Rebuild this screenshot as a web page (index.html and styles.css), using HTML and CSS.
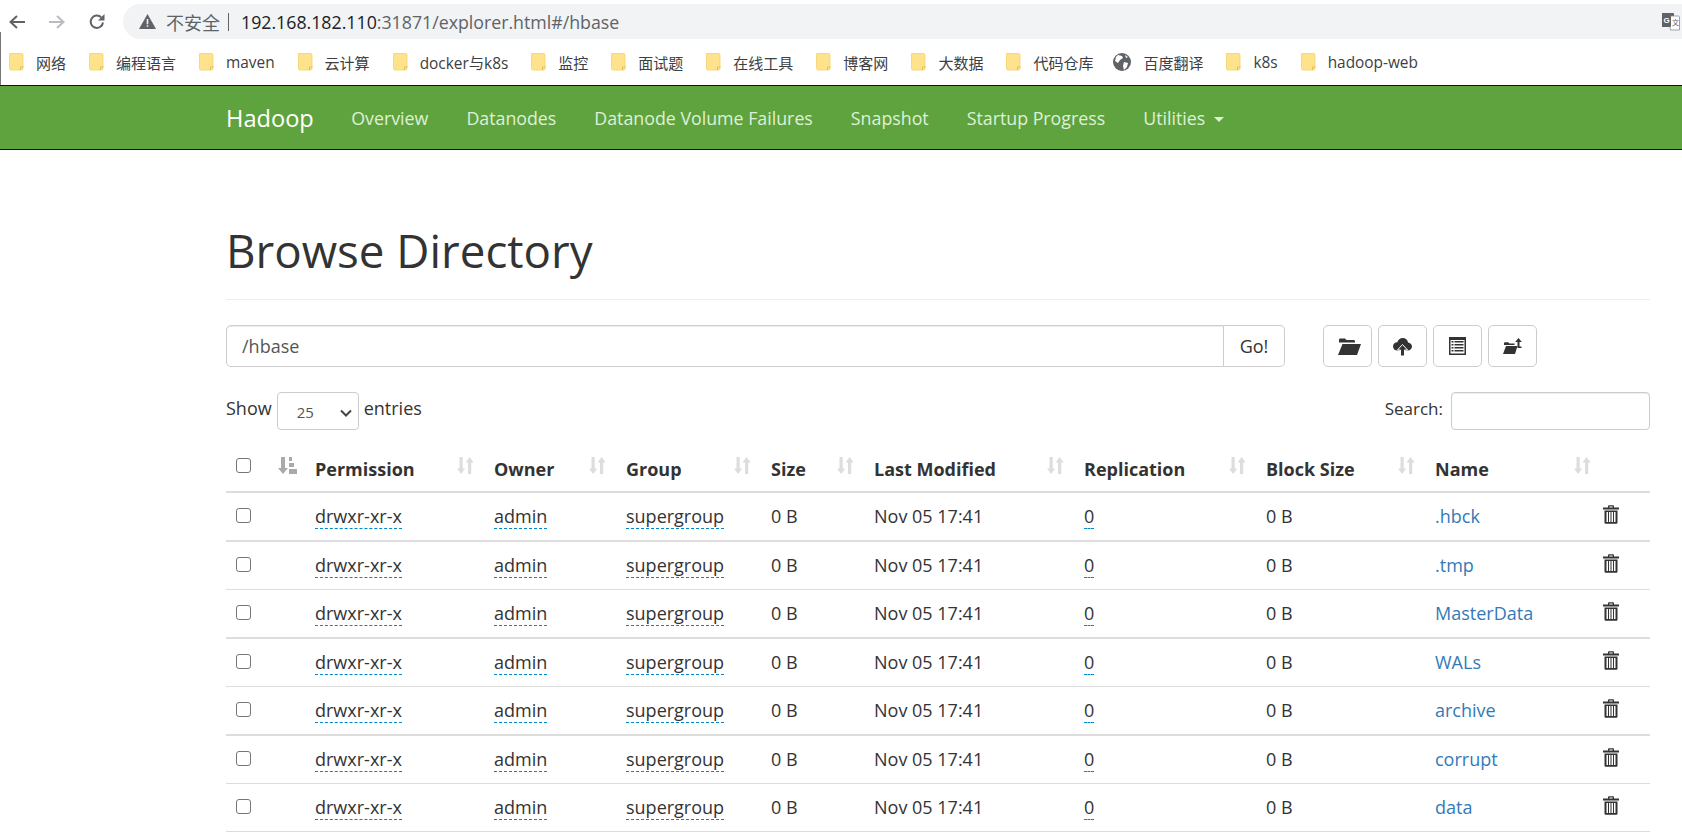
FILE: index.html
```html
<!DOCTYPE html>
<html lang="en">
<head>
  <meta charset="UTF-8" />
  <title>Browsing HDFS</title>
  <link rel="stylesheet" href="styles.css">
</head>
<body>

<svg class="defs" width="0" height="0">
  <symbol id="folder-y" viewBox="0 0 15 18">
    <path d="M1 0.500h11.500c1 0 1.500 0.500 1.500 1.500v13.500c0 1-0.500 1.500-1.500 1.500h-10.500c-1 0-1.500-0.500-1.500-1.500v-14.500c0-0.300 0-0.500 0.500-0.500z" fill="#ffe38c" stroke="#f5d26a" stroke-width="0.800"/>
    <path d="M11.500 17v-3h3" fill="none" stroke="#e9bd4c" stroke-width="1"/>
  </symbol>
  <symbol id="sort" viewBox="0 0 17 17">
    <path d="M2.500 0h3.200v11.500h2.500l-4.100 5.500-4.100-5.500h2.500z" fill="currentColor"/>
    <path d="M11 17h3.200V5.500h2.500L12.600 0 8.500 5.500H11z" fill="currentColor"/>
  </symbol>
  <symbol id="trash" viewBox="0 0 16 19">
    <path d="M5 2.500v-1c0-0.700 0.400-1.200 1.200-1.200h3.600c0.800 0 1.200 0.500 1.200 1.200v1h5v2H0v-2zM6.300 2.500h3.400v-1H6.300z" fill="#333" fill-rule="evenodd"/>
    <path d="M1.500 5.500h13v11.800c0 1-0.500 1.500-1.500 1.500H3c-1 0-1.500-0.500-1.500-1.500zM3.500 7v10h1.500V7zM6 7v10h1.500V7zM8.500 7v10H10V7zM11 7v10h1.500V7z" fill="#333" fill-rule="evenodd"/>
  </symbol>
</svg>

<div class="edge-line"></div>

<div class="toolbar">
  <svg class="tb-icon" width="18" height="16" viewBox="0 0 18 16"><path d="M17 8H3M9 2L2.500 8 9 14" fill="none" stroke="#5f6368" stroke-width="2"/></svg>
  <svg class="tb-icon forward" width="18" height="16" viewBox="0 0 18 16"><path d="M1 8h14M9 2l6.500 6L9 14" fill="none" stroke="#b9bcc0" stroke-width="2"/></svg>
  <svg class="tb-icon reload" width="18" height="18" viewBox="0 0 18 18"><path d="M15 9.500A6.200 6.200 0 1 1 13.200 4.300" fill="none" stroke="#5f6368" stroke-width="2"/><path d="M16.500 1v6.500h-6.500z" fill="#5f6368"/></svg>
  <div class="omnibox">
    <svg class="warn" width="17" height="15" viewBox="0 0 17 15"><path d="M8.500 0L17 15H0z" fill="#5f6368"/><path d="M7.700 5h1.600v5.200H7.700zM7.700 11.200h1.600v1.600H7.700z" fill="#f1f3f4"/></svg>
    <span class="not-secure">不安全</span>
    <span class="sep"></span>
    <span class="url">192.168.182.110<span class="url-rest">:31871/explorer.html#/hbase</span></span>
    <svg class="translate" width="18" height="18" viewBox="0 0 18 18"><rect x="0" y="0" width="12" height="14" rx="1" fill="#5f6368"/><path d="M6 3h10.500c0.500 0 1 0.500 1 1v13h-9z" fill="#fff" stroke="#8a8d91" stroke-width="0.800"/><rect x="0" y="0" width="9" height="14" rx="1" fill="#5f6368"/><text x="1.500" y="10" class="translate-g">G</text><text x="10" y="12" class="translate-a">文</text></svg>
  </div>
</div>

<div class="bookmarks">
  <a class="mark"><svg width="15" height="18"><use href="#folder-y"/></svg>网络</a>
  <a class="mark"><svg width="15" height="18"><use href="#folder-y"/></svg>编程语言</a>
  <a class="mark latin"><svg width="15" height="18"><use href="#folder-y"/></svg>maven</a>
  <a class="mark"><svg width="15" height="18"><use href="#folder-y"/></svg>云计算</a>
  <a class="mark latin"><svg width="15" height="18"><use href="#folder-y"/></svg>docker与k8s</a>
  <a class="mark"><svg width="15" height="18"><use href="#folder-y"/></svg>监控</a>
  <a class="mark"><svg width="15" height="18"><use href="#folder-y"/></svg>面试题</a>
  <a class="mark"><svg width="15" height="18"><use href="#folder-y"/></svg>在线工具</a>
  <a class="mark"><svg width="15" height="18"><use href="#folder-y"/></svg>博客网</a>
  <a class="mark"><svg width="15" height="18"><use href="#folder-y"/></svg>大数据</a>
  <a class="mark before-globe"><svg width="15" height="18"><use href="#folder-y"/></svg>代码仓库</a>
  <a class="mark"><svg width="18" height="18" viewBox="0 0 18 18"><circle cx="9" cy="9" r="9" fill="#5f6368"/><path d="M5 2l4 1 1 2-3 2-2 3-3-2 1-4zM11 9l4 1-1 4-3 3-1-4zM12 2l3 2-2 1z" fill="#fff"/></svg>百度翻译</a>
  <a class="mark latin"><svg width="15" height="18"><use href="#folder-y"/></svg>k8s</a>
  <a class="mark latin"><svg width="15" height="18"><use href="#folder-y"/></svg>hadoop-web</a>
</div>

<nav class="navbar">
  <a class="brand">Hadoop</a>
  <a class="nav-link">Overview</a>
  <a class="nav-link">Datanodes</a>
  <a class="nav-link">Datanode Volume Failures</a>
  <a class="nav-link">Snapshot</a>
  <a class="nav-link">Startup Progress</a>
  <a class="nav-link">Utilities <span class="caret"></span></a>
</nav>

<div class="container">
  <h1 class="page-title">Browse Directory</h1>

  <div class="path-row">
    <div class="path-group">
      <input class="path-input" type="text" value="/hbase">
      <button class="go-btn">Go!</button>
    </div>
    <div class="tool-btns">
      <button class="tool-btn"><svg class="nudge" width="23" height="17" viewBox="0 0 23 17"><path d="M1 4.500V2C1 1 1.500 0.500 2.500 0.500h4.500l1.500 1.500h7c1 0 1.500 0.500 1.500 1.500v1z" fill="#333"/><path d="M4.500 6H23l-4 11H0z" fill="#333"/></svg></button>
      <button class="tool-btn"><svg width="19" height="19" viewBox="0 0 19 19"><path d="M4.300 13.500C1.800 13.500 0 11.700 0 9.400 0 7 1.900 5.200 4.300 5.200 5 2.700 7.200 1 9.800 1c2.700 0 4.900 1.900 5.300 4.400 2.200 0.300 3.900 2 3.900 4.100 0 2.300-1.900 4-4.400 4z" fill="#333"/><path d="M9.500 7.500l5 5.500h-3v6h-4v-6h-3z" fill="#333" stroke="#fff" stroke-width="1"/></svg></button>
      <button class="tool-btn"><svg width="17" height="18" viewBox="0 0 17 18"><path d="M0 0h17v18H0zM1.500 3v13.500h14V3z" fill="#333" fill-rule="evenodd"/><path d="M2.500 4h2v1.500h-2zM5.500 4h9v1.500h-9zM2.500 7h2v1.500h-2zM5.500 7h9v1.500h-9zM2.500 10h2v1.500h-2zM5.500 10h9v1.500h-9zM2.500 13h2v1.500h-2zM5.500 13h9v1.500h-9z" fill="#333"/></svg></button>
      <button class="tool-btn"><svg width="19" height="16" viewBox="0 0 19 16"><path d="M1 7V5.500c0-0.800 0.400-1.200 1.200-1.200h3l1.300 1.200h5V7z" fill="#333"/><path d="M3 8h11.500l-2.500 8H0z" fill="#333"/><path d="M15.500 0l3.300 4h-2.300v4.500h2V10h-4V4H12.200z" fill="#333"/></svg></button>
    </div>
  </div>

  <div class="table-controls">
    <label class="length-label">Show
      <span class="fake-select">25<svg width="12" height="8" viewBox="0 0 12 8"><path d="M1 1.500l5 5 5-5" fill="none" stroke="#444" stroke-width="2"/></svg></span>
      entries</label>
    <label class="search-label">Search: <input class="search-input" type="text"></label>
  </div>

  <table class="file-table">
    <colgroup>
      <col class="c-check"><col class="c-sort"><col class="c-perm"><col class="c-owner"><col class="c-group"><col class="c-size"><col class="c-mod"><col class="c-repl"><col class="c-block"><col class="c-name"><col class="c-del">
    </colgroup>
    <thead>
      <tr>
        <th><span class="cb"></span></th>
        <th class="first-sort"><svg width="19" height="19" viewBox="0 0 19 19"><path d="M3 1h4v11h3l-5 6-5-6h3z" fill="#aaa"/><path d="M11 1h3v4h-3zM11 7h5v4h-5zM11 13h8v5h-8z" fill="#aaa"/></svg></th>
        <th><div class="th-in">Permission<svg class="sort-ic" width="17" height="17"><use href="#sort"/></svg></div></th>
        <th><div class="th-in">Owner<svg class="sort-ic" width="17" height="17"><use href="#sort"/></svg></div></th>
        <th><div class="th-in">Group<svg class="sort-ic" width="17" height="17"><use href="#sort"/></svg></div></th>
        <th><div class="th-in">Size<svg class="sort-ic" width="17" height="17"><use href="#sort"/></svg></div></th>
        <th><div class="th-in">Last Modified<svg class="sort-ic" width="17" height="17"><use href="#sort"/></svg></div></th>
        <th><div class="th-in">Replication<svg class="sort-ic" width="17" height="17"><use href="#sort"/></svg></div></th>
        <th><div class="th-in">Block Size<svg class="sort-ic" width="17" height="17"><use href="#sort"/></svg></div></th>
        <th><div class="th-in">Name<svg class="sort-ic" width="17" height="17"><use href="#sort"/></svg></div></th>
        <th></th>
      </tr>
    </thead>
    <tbody id="rows"></tbody>
  </table>
</div>

<script>
  const names = ['.hbck', '.tmp', 'MasterData', 'WALs', 'archive', 'corrupt', 'data'];
  const tbody = document.getElementById('rows');
  names.forEach(name => {
    const tr = document.createElement('tr');
    tr.innerHTML = `
      <td><span class="cb"></span></td>
      <td></td>
      <td><a class="editable">drwxr-xr-x</a></td>
      <td><a class="editable">admin</a></td>
      <td><a class="editable">supergroup</a></td>
      <td>0 B</td>
      <td>Nov 05 17:41</td>
      <td><a class="editable">0</a></td>
      <td>0 B</td>
      <td><a class="file-link">${name}</a></td>
      <td class="del-cell"><svg width="16" height="19"><use href="#trash"/></svg></td>`;
    tbody.appendChild(tr);
  });
</script>

</body>
</html>
```

FILE: styles.css
```css
html, body {
  margin: 0;
  padding: 0;
  height: 832px;
  overflow: hidden;
}
body {
  font-family: "Open Sans", "Noto Sans CJK SC", sans-serif;
  background: #fff;
  color: #333;
  font-size: 18px;
}
.defs {
  display: block;
  height: 0;
}
.edge-line {
  position: absolute;
  left: 0;
  top: 32px;
  width: 1px;
  height: 53px;
  background: #777;
}

/* browser chrome */
.toolbar {
  display: flex;
  align-items: center;
  height: 35px;
  padding: 4px 0 0 8px;
}
.tb-icon {
  flex: none;
  margin-right: 22px;
}
.tb-icon.reload {
  margin-right: 17px;
}
.omnibox {
  flex: 1;
  display: flex;
  align-items: center;
  height: 35px;
  padding-left: 16px;
  background: #f1f3f4;
  border-radius: 18px 0 0 18px;
  font-size: 18px;
}
.warn {
  margin-right: 10px;
}
.not-secure {
  color: #5f6368;
  font-family: "Noto Sans CJK SC", sans-serif;
}
.sep {
  width: 1px;
  height: 18px;
  background: #5f6368;
  margin: 0 12px 0 8px;
}
.url {
  color: #202124;
  font-family: "Open Sans", sans-serif;
  font-size: 17.750px;
}
.url-rest {
  color: #5f6368;
}
.translate {
  margin-left: auto;
  margin-right: 2px;
}
.translate-g {
  font: bold 8px "Liberation Sans", sans-serif;
  fill: #fff;
}
.translate-a {
  font: 7px "Noto Sans CJK SC", sans-serif;
  fill: #5f6368;
}
.bookmarks {
  display: flex;
  align-items: center;
  height: 46px;
  padding-left: 9px;
  font-family: "Open Sans", "Noto Sans CJK SC", sans-serif;
  font-size: 15px;
  color: #3c4043;
}
.mark {
  display: flex;
  align-items: center;
  gap: 12px;
  margin-right: 23px;
}
.mark.latin {
  font-size: 15.400px;
}
.mark.before-globe {
  margin-right: 20px;
}

/* navbar */
.navbar {
  display: flex;
  align-items: center;
  height: 63px;
  padding-left: 226px;
  background: #5fa33e;
  border-top: 1px solid #111;
  border-bottom: 1px solid #111;
  font-size: 17.800px;
}
.brand {
  color: #fff;
  font-size: 23.600px;
  margin-right: 18.500px;
}
.nav-link {
  color: #dff0d8;
  padding: 0 19px;
}
.caret {
  display: inline-block;
  width: 0;
  height: 0;
  margin-left: 4px;
  vertical-align: middle;
  border-top: 5px solid #dff0d8;
  border-left: 5px solid transparent;
  border-right: 5px solid transparent;
}

/* page */
.container {
  margin: 0 32px 0 226px;
}
.page-title {
  margin: 0;
  padding: 70px 0 19px;
  font-size: 45.700px;
  font-weight: 400;
  line-height: 60px;
  border-bottom: 1px solid #eee;
}
.path-row {
  display: flex;
  margin-top: 25px;
}
.path-group {
  display: flex;
  width: 1059px;
  height: 42px;
}
.path-input {
  flex: 1;
  min-width: 0;
  padding: 0 15px;
  border: 1px solid #ccc;
  border-radius: 5px 0 0 5px;
  box-shadow: inset 0 1px 1px rgba(0,0,0,0.075);
  font: inherit;
  color: #555;
}
.go-btn {
  width: 61px;
  background: #fff;
  border: 1px solid #ccc;
  border-left: none;
  border-radius: 0 5px 5px 0;
  font: inherit;
  color: #333;
}
.tool-btns {
  display: flex;
  gap: 6px;
  margin-left: 38px;
}
.tool-btn {
  display: flex;
  align-items: center;
  justify-content: center;
  width: 49px;
  height: 42px;
  padding: 0;
  background: #fff;
  border: 1px solid #ccc;
  border-radius: 5px;
}
.nudge {
  margin-left: 4px;
}
.table-controls {
  display: flex;
  justify-content: space-between;
  align-items: center;
  margin-top: 25px;
  height: 38px;
}
.length-label, .search-label {
  display: flex;
  align-items: flex-start;
  gap: 5px;
  line-height: 33px;
}
.search-label {
  font-size: 17px;
  gap: 8px;
}
.fake-select {
  display: flex;
  align-items: center;
  justify-content: space-between;
  box-sizing: border-box;
  width: 82px;
  height: 38px;
  padding: 3px 6px 0 19px;
  border: 1px solid #ccc;
  border-radius: 4px;
  font-size: 15px;
  color: #555;
}
.search-input {
  box-sizing: border-box;
  width: 199px;
  height: 38px;
  border: 1px solid #ccc;
  border-radius: 4px;
  box-shadow: inset 0 1px 1px rgba(0,0,0,0.075);
}

/* table */
.file-table {
  width: 1424px;
  margin-top: 13px;
  border-collapse: separate;
  border-spacing: 0;
  table-layout: fixed;
}
.c-check { width: 42px; }
.c-sort { width: 37px; }
.c-perm { width: 179px; }
.c-owner { width: 132px; }
.c-group { width: 145px; }
.c-size { width: 103px; }
.c-mod { width: 210px; }
.c-repl { width: 182px; }
.c-block { width: 169px; }
.c-name { width: 176px; }
.c-del { width: 49px; }
.file-table th {
  box-sizing: border-box;
  height: 50px;
  padding: 3px 10px 0;
  text-align: left;
  font-weight: 700;
  border-bottom: 2px solid #ddd;
}
.file-table td {
  box-sizing: border-box;
  height: 48px;
  padding: 0 10px 2px;
  border-bottom: 1px solid #ddd;
}
.file-table tr:nth-child(odd):not(:last-child) td {
  height: 49px;
  border-bottom-width: 2px;
}
.th-in {
  display: flex;
  justify-content: space-between;
  align-items: center;
}
.sort-ic {
  color: #ddd;
  margin-top: -6px;
}
.first-sort svg {
  display: block;
  margin-top: -7px;
}
.cb {
  display: block;
  box-sizing: border-box;
  width: 15px;
  height: 15px;
  border: 1.500px solid #767676;
  border-radius: 3px;
}
.file-table td .cb {
  margin-top: -1px;
}
.file-table th .cb {
  margin-top: -6px;
}
.editable {
  border-bottom: 1px dashed #0088cc;
  color: #333;
}
.file-link {
  color: #337ab7;
}
.file-table .del-cell {
  padding: 0 0 2px 2px;
}
.del-cell svg {
  display: block;
  margin-top: -2px;
}
```
